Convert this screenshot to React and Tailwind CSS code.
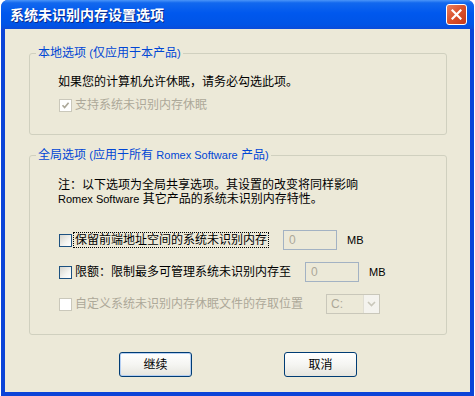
export default function App() {
  const font = "font-['Liberation_Sans','Noto_Sans_CJK_SC',sans-serif]";

  const Check = ({ checked, disabled }) => (
    <span
      className={
        disabled
          ? "w-[13px] h-[13px] border border-[#CAC8BB] bg-white flex items-center justify-center shrink-0"
          : "w-[13px] h-[13px] border border-[#1C5180] bg-[linear-gradient(135deg,#d6d5ce_0%,#f4f4f0_60%,#ffffff_100%)] flex items-center justify-center shrink-0"
      }
    >
      {checked && (
        <svg width="9" height="9" viewBox="0 0 9 9">
          <path d="M1.5 4.2 L3.6 6.5 L7.6 1.8" fill="none" stroke="#ACA899" strokeWidth="1.7" />
        </svg>
      )}
    </span>
  );

  const Input = ({ value }) => (
    <div className="w-[54px] h-[20px] border border-[#A3B2C3] bg-[#ECE9D8] flex items-center pl-[5px] text-[12px] text-[#ACA899] leading-none">
      {value}
    </div>
  );

  const Button = ({ label, def }) => (
    <div
      className={
        def
          ? "w-[73px] h-[25px] rounded-[3px] border border-[#003C74] bg-[linear-gradient(to_bottom,#ffffff_0%,#f5f5f2_50%,#e6e5de_100%)] shadow-[inset_0_0_0_1px_#b5cff3] flex items-center justify-center text-[12px] text-black"
          : "w-[73px] h-[25px] rounded-[3px] border border-[#003C74] bg-[linear-gradient(to_bottom,#ffffff_0%,#f5f5f2_50%,#e6e5de_100%)] flex items-center justify-center text-[12px] text-black"
      }
    >
      {label}
    </div>
  );

  return (
    <div className={`w-[475px] h-[396px] bg-white flex overflow-hidden text-[12px] ${font}`}>
      <div className="w-[1px] shrink-0" />
      <div className="w-[473px] h-[396px] shrink-0 flex flex-col rounded-t-[7px] bg-[#0B44D8] overflow-hidden">
        {/* Title bar */}
        <div className="h-[29px] shrink-0 flex items-center justify-between pl-[9px] pr-[7px] bg-[linear-gradient(to_bottom,#4b95f8_0%,#1268ee_10%,#0058ee_45%,#0054e6_85%,#0b4bd9_100%)]">
          <span className="text-white font-bold text-[14px] leading-none [text-shadow:1px_1px_0_#0a2a8a]">
            系统未识别内存设置选项
          </span>
          <div className="w-[21px] h-[21px] rounded-[3px] border border-white bg-[linear-gradient(135deg,#e9805f_0%,#d9502b_50%,#c4391a_100%)] flex items-center justify-center">
            <svg width="11" height="11" viewBox="0 0 11 11">
              <path d="M1.5 1.5 L9.5 9.5 M9.5 1.5 L1.5 9.5" stroke="white" strokeWidth="2.2" strokeLinecap="square" />
            </svg>
          </div>
        </div>

        {/* Body */}
        <div className="flex-1 mx-[4px] mb-[4px] bg-[#ECE9D8] flex flex-col pl-[24px] pr-[23px]">
          {/* Group 1 */}
          <div className="relative mt-[24px] h-[82px] border border-[#D0D0BF] rounded-[3px] pl-[28px] pt-[20px]">
            <span className="absolute left-[6px] top-[-9px] px-[2px] bg-[#ECE9D8] text-[#0046D5] leading-[16px]">
              本地选项 <span className="text-[11px]">(</span>仅应用于本产品<span className="text-[11px]">)</span>
            </span>
            <div className="leading-[16px] text-black">如果您的计算机允许休眠，请务必勾选此项。</div>
            <div className="mt-[7px] h-[16px] flex items-center ml-[1px]">
              <Check checked disabled />
              <span className="ml-[3px] text-[#ACA899] leading-[16px]">支持系统未识别内存休眠</span>
            </div>
          </div>

          {/* Group 2 */}
          <div className="relative mt-[20px] h-[180px] border border-[#D0D0BF] rounded-[3px] pl-[28px] pt-[22px]">
            <span className="absolute left-[6px] top-[-9px] px-[2px] bg-[#ECE9D8] text-[#0046D5] leading-[16px]">
              全局选项 <span className="text-[11px]">(</span>应用于所有 <span className="text-[11px]">Romex Software</span> 产品<span className="text-[11px]">)</span>
            </span>
            <div className="leading-[14px] text-black">
              <div>注：以下选项为全局共享选项。其设置的改变将同样影响</div>
              <div><span className="text-[11px]">Romex Software</span> 其它产品的系统未识别内存特性。</div>
            </div>

            <div className="mt-[24px] flex flex-col gap-[12px] ml-[1px]">
              <div className="h-[20px] flex items-center">
                <Check />
                <div className="w-[211px] flex items-center">
                  <span className="ml-[1px] border border-dotted border-black px-[1px] leading-[14px] text-black">
                    保留前端地址空间的系统未识别内存
                  </span>
                </div>
                <Input value="0" />
                <span className="ml-[10px] text-[11px] text-black">MB</span>
              </div>

              <div className="h-[20px] flex items-center">
                <Check />
                <div className="w-[233px] flex items-center">
                  <span className="ml-[3px] leading-[14px] text-black">限额：限制最多可管理系统未识别内存至</span>
                </div>
                <Input value="0" />
                <span className="ml-[10px] text-[11px] text-black">MB</span>
              </div>

              <div className="h-[20px] flex items-center">
                <Check disabled />
                <div className="w-[254px] flex items-center">
                  <span className="ml-[3px] leading-[14px] text-[#ACA899]">自定义系统未识别内存休眠文件的存取位置</span>
                </div>
                <div className="w-[54px] h-[20px] border border-[#C9C7BA] bg-[#ECE9D8] flex items-center justify-between">
                  <span className="pl-[4px] text-[12px] text-[#ACA899] leading-none">C:</span>
                  <div className="w-[16px] h-[18px] bg-[#F4F3EE] border-l border-[#E0DED3] flex items-center justify-center">
                    <svg width="9" height="6" viewBox="0 0 9 6">
                      <path d="M1 1 L4.5 4.5 L8 1" fill="none" stroke="#C9C7BA" strokeWidth="1.6" />
                    </svg>
                  </div>
                </div>
              </div>
            </div>
          </div>

          {/* Buttons */}
          <div className="mt-[17px] flex">
            <div className="ml-[90px]">
              <Button label="继续" def />
            </div>
            <div className="ml-[92px]">
              <Button label="取消" />
            </div>
          </div>
        </div>
      </div>
      <div className="w-[1px] shrink-0" />
    </div>
  );
}
